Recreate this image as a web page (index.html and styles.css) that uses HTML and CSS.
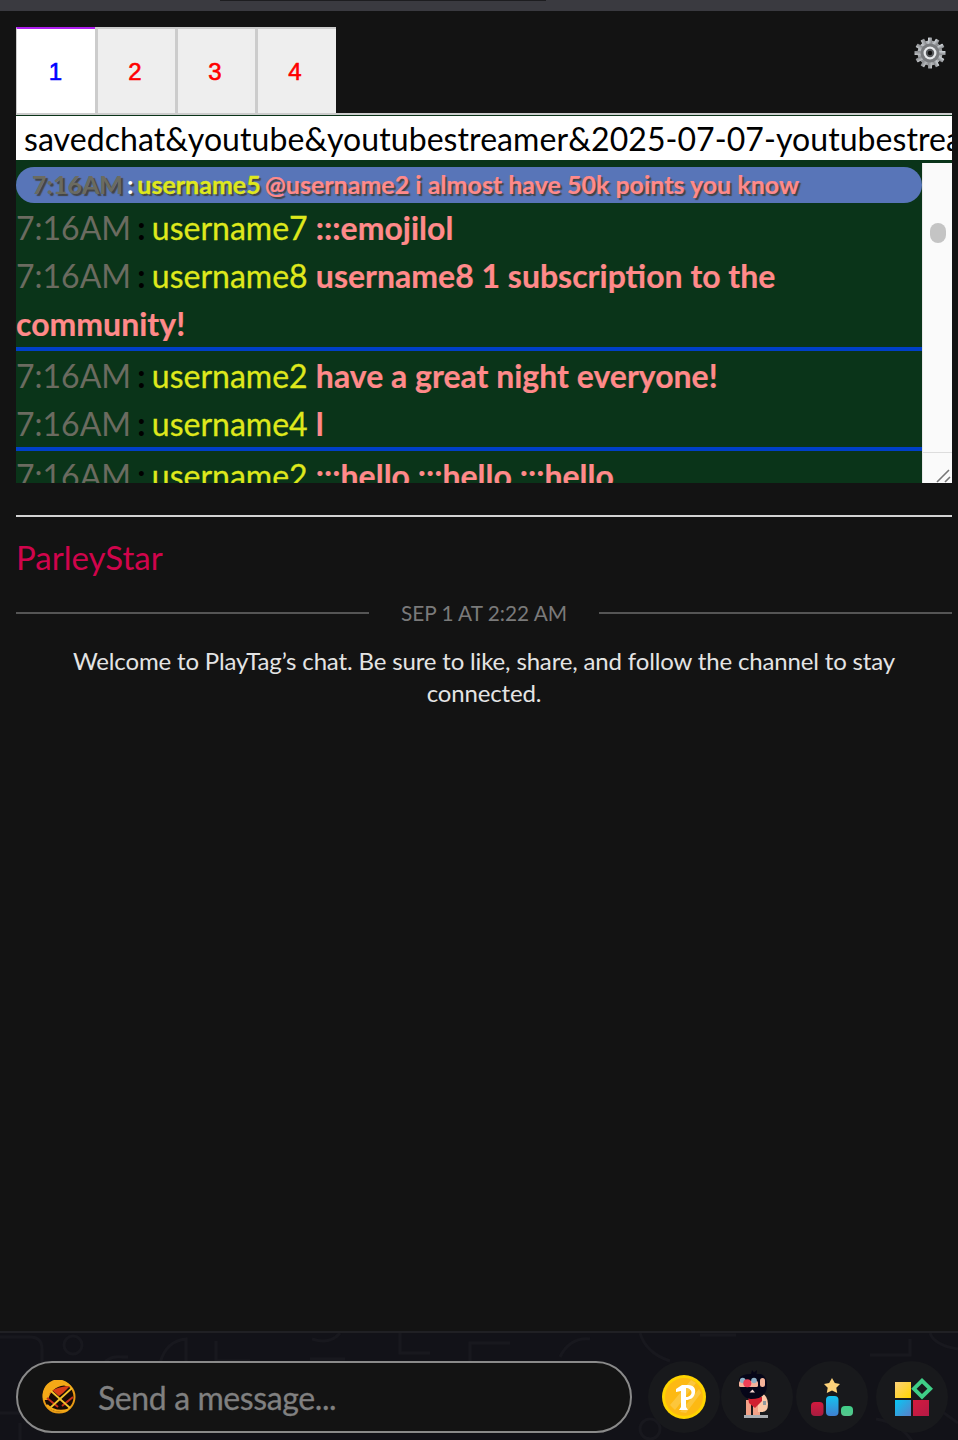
FILE: index.html
```html
<!DOCTYPE html>
<html lang="en">
<head>
<meta charset="utf-8">
<title>Chat</title>
<link rel="stylesheet" href="styles.css">
</head>
<body>
<div class="topbar"><div class="topbar-notch"></div></div>
<main class="main">
  <section class="panel">
    <div class="tabs-row">
      <div class="tabs">
        <div class="tab tab-active">1</div>
        <div class="tab">2</div>
        <div class="tab">3</div>
        <div class="tab">4</div>
      </div>
      <svg class="gear" viewBox="0 0 32 32" aria-hidden="true">
        <defs>
          <linearGradient id="gearfill" x1="0" y1="0" x2="1" y2="1">
            <stop offset="0" stop-color="#d8dde2"/>
            <stop offset="0.5" stop-color="#8b8d90"/>
            <stop offset="1" stop-color="#c4c7ca"/>
          </linearGradient>
        </defs>
        <g fill="url(#gearfill)">
          <circle cx="16" cy="16" r="12.5"/>
          <rect x="14" y="0.5" width="4" height="31" rx="0.6"/>
          <rect x="14" y="0.5" width="4" height="31" rx="0.6" transform="rotate(30 16 16)"/>
          <rect x="14" y="0.5" width="4" height="31" rx="0.6" transform="rotate(60 16 16)"/>
          <rect x="14" y="0.5" width="4" height="31" rx="0.6" transform="rotate(90 16 16)"/>
          <rect x="14" y="0.5" width="4" height="31" rx="0.6" transform="rotate(120 16 16)"/>
          <rect x="14" y="0.5" width="4" height="31" rx="0.6" transform="rotate(150 16 16)"/>
        </g>
        <circle cx="16" cy="16" r="9.5" fill="#77797c"/>
        <circle cx="16" cy="16" r="6.5" fill="#e6e8ea"/>
        <circle cx="16" cy="16" r="4.2" fill="#55575a"/>
        <circle cx="16" cy="16" r="2.2" fill="#111"/>
      </svg>
    </div>
    <div class="rule-tabs"></div>
    <div class="path-box"><div class="path-text">savedchat&amp;youtube&amp;youtubestreamer&amp;2025-07-07-youtubestreamer</div></div>
    <div class="chat-wrap">
      <div class="chat">
        <div class="pill"><span class="time">7:16AM</span><span class="colon"> : </span><span class="user">username5</span> <span class="msg">@username2 i almost have 50k points you know</span></div>
        <div class="line"><span class="time">7:16AM</span><span class="colon"> : </span><span class="user">username7</span> <span class="msg">:::emojilol</span></div>
        <div class="line line-end"><span class="time">7:16AM</span><span class="colon"> : </span><span class="user">username8</span> <span class="msg">username8 1 subscription to the community!</span></div>
        <div class="line"><span class="time">7:16AM</span><span class="colon"> : </span><span class="user">username2</span> <span class="msg">have a great night everyone!</span></div>
        <div class="line line-end"><span class="time">7:16AM</span><span class="colon"> : </span><span class="user">username4</span> <span class="msg">l</span></div>
        <div class="line"><span class="time">7:16AM</span><span class="colon"> : </span><span class="user">username2</span> <span class="msg">:::hello :::hello :::hello</span></div>
      </div>
      <div class="scroll">
        <div class="scroll-thumb"></div>
        <svg class="grip" viewBox="0 0 16 16" aria-hidden="true"><path d="M2 15 L14 3 M10 15 L15 10" stroke="#777" stroke-width="1.6" fill="none"/></svg>
      </div>
    </div>
  </section>
  <div class="rule-main"></div>
  <h2 class="title">ParleyStar</h2>
  <div class="date-row"><span class="date-line"></span><span class="date">SEP 1 AT 2:22 AM</span><span class="date-line"></span></div>
  <p class="welcome">Welcome to PlayTag’s chat. Be sure to like, share, and follow the channel to stay connected.</p>
</main>
<footer class="footer">
  <svg class="pattern" viewBox="0 0 958 108" preserveAspectRatio="none" aria-hidden="true">
    <g fill="none" stroke="#18181e" stroke-width="3">
      <circle cx="73" cy="12" r="9"/>
      <path d="M0 4 H30 Q42 4 42 16 V40 M100 40 Q104 22 122 24 H128 M160 30 Q166 8 186 6 V40 M216 8 V28 H250 M310 26 H345 M400 0 V20 H430 M470 28 V10 H510 M560 24 Q570 4 590 6 M640 0 Q646 20 670 28 M312 6 Q330 12 340 0 M700 2 H736 M930 0 Q934 12 958 16 M870 22 H910 V6"/>
      <circle cx="650" cy="96" r="10"/>
      <path d="M0 80 H28 M20 108 V90 M690 82 Q700 76 716 78 M876 86 Q900 90 912 108 M930 70 L958 90"/>
    </g>
  </svg>
  <div class="input-pill">
    <svg class="flame" viewBox="0 0 34 34" aria-hidden="true">
      <circle cx="17" cy="17" r="15.5" fill="#180b06" stroke="#e89a14" stroke-width="2"/>
      <path d="M1.5 20 A15.5 15.5 0 0 1 30 8 L22 5.5 Q9 7 6 20 Z" fill="#f4a917"/>
      <path d="M7 15 Q10 7 28 6 L21 13 L17 16 L11 11 Z" fill="#d93d16"/>
      <path d="M5 18 L16 27 M20 26 L31 17" stroke="#c8301a" stroke-width="2" fill="none"/>
      <path d="M9 11 L28 28 M8 28 L30 8" stroke="#f3c22b" stroke-width="1.8" fill="none"/>
      <path d="M5 25 Q12 33 26 30" stroke="#f4a917" stroke-width="2" fill="none"/>
    </svg>
    <span class="placeholder">Send a message...</span>
  </div>
  <div class="round round-coin">
    <svg class="ico-coin" viewBox="0 0 44 44" aria-hidden="true">
      <circle cx="22" cy="22" r="22" fill="#ffd400"/>
      <circle cx="22" cy="22" r="19" fill="#fdb913"/>
      <path d="M8 30 L29 5 L34 8 L13 35 Z M18 37 L37 14 L39 18 L24 38 Z" fill="#fcc63c"/>
      <path fill-rule="evenodd" fill="#fff" d="M14 14 L20 10 H26 C32 10 34 14 33 18 C32 23 28 25 24 25 V32 L26 35 H17 L19 32 V16 L14 17 Z M24 13 V22 C27 22 29.5 20 29.5 17.5 C29.5 15 27 13 24 13 Z"/>
    </svg>
  </div>
  <div class="round round-cave">
    <svg class="ico-cave" viewBox="0 0 34 48" aria-hidden="true">
      <rect x="7" y="45" width="24" height="3" fill="#a9adb2"/>
      <rect x="9" y="30" width="5" height="15" fill="#f3a187"/>
      <rect x="16" y="30" width="7" height="15" fill="#f3a187"/>
      <path d="M23 22 Q31 25 31 34 Q31 42 25 42 H21 V22 Z" fill="#fbc9a8"/>
      <rect x="26" y="31" width="3" height="4" fill="#8f9aa0"/>
      <path d="M11 27 H25 V31 L18 38 L12 33 Z" fill="#d1202f"/>
      <path d="M2 9 Q4 4 14 4 L15 0 L17 2.5 L20 0 L19.5 4 H24 Q30 7 30 15 Q30 29 14 29 Q2 28 2 9 Z" fill="#060618"/>
      <rect x="23" y="8" width="5" height="9" rx="2.5" fill="#f5b39a"/>
      <rect x="2" y="11" width="19" height="6" rx="1.5" fill="#f5b39a"/>
      <circle cx="5.7" cy="10.5" r="2.8" fill="#8fb2c8"/>
      <circle cx="17" cy="10.5" r="2.8" fill="#8fb2c8"/>
      <circle cx="10.3" cy="13.3" r="4" fill="#ee3f57"/>
      <path d="M12.5 22.5 L15.5 19.5 L18 22.5 Z" fill="#f3d6cf"/>
    </svg>
  </div>
  <div class="round round-rank">
    <svg class="ico-rank" viewBox="0 0 42 38" aria-hidden="true">
      <defs>
        <linearGradient id="rankb" x1="0" y1="0" x2="0" y2="1"><stop offset="0" stop-color="#14c3f0"/><stop offset="1" stop-color="#3f7fd0"/></linearGradient>
        <linearGradient id="rankr" x1="0" y1="0" x2="0" y2="1"><stop offset="0" stop-color="#d31a3e"/><stop offset="1" stop-color="#a81c40"/></linearGradient>
        <linearGradient id="rankg" x1="0" y1="0" x2="0" y2="1"><stop offset="0" stop-color="#3fcf87"/><stop offset="1" stop-color="#57c48e"/></linearGradient>
      </defs>
      <path d="M21 0 L23.8 5 L29 6 L25.3 9.8 L26.2 15 L21 12.6 L15.8 15 L16.7 9.8 L13 6 L18.2 5 Z" fill="#fdd27a"/>
      <rect x="0" y="24" width="12.5" height="14" rx="4" fill="url(#rankr)"/>
      <rect x="15" y="18" width="12.5" height="20" rx="4" fill="url(#rankb)"/>
      <rect x="30" y="28" width="12" height="10" rx="4" fill="url(#rankg)"/>
    </svg>
  </div>
  <div class="round round-blocks">
    <svg class="ico-blocks" viewBox="0 0 38 38" aria-hidden="true">
      <defs>
        <linearGradient id="bly" x1="0" y1="0" x2="1" y2="1"><stop offset="0" stop-color="#fdd27a"/><stop offset="1" stop-color="#ffd400"/></linearGradient>
        <linearGradient id="blb" x1="0" y1="0" x2="1" y2="1"><stop offset="0" stop-color="#06c8f5"/><stop offset="1" stop-color="#5a7fc8"/></linearGradient>
        <linearGradient id="blr" x1="0" y1="0" x2="1" y2="1"><stop offset="0" stop-color="#d31a3e"/><stop offset="1" stop-color="#b51a46"/></linearGradient>
      </defs>
      <rect x="0" y="4" width="16" height="16" fill="url(#bly)"/>
      <rect x="0" y="22" width="16" height="16" fill="url(#blb)"/>
      <rect x="18" y="22" width="16" height="16" fill="url(#blr)"/>
      <path d="M27 0 L38 10.7 L27 21.5 L16.2 10.7 Z M27 5.5 L21.6 10.7 L27 16 L32.4 10.7 Z" fill="#3fcf87" fill-rule="evenodd"/>
    </svg>
  </div>
</footer>
</body>
</html>
```
FILE: styles.css
```css
* { box-sizing: border-box; }
html, body { margin: 0; padding: 0; }
body {
  width: 958px;
  height: 1440px;
  overflow: hidden;
  display: flex;
  flex-direction: column;
  background: #131313;
  font-family: Lato, "Noto Sans", sans-serif;
}
.topbar {
  height: 11px;
  flex: none;
  background: #3a3a40;
  padding-left: 220px;
}
.topbar-notch {
  width: 326px;
  height: 1px;
  background: #1d1d20;
}
.main {
  flex: 1;
  min-height: 0;
  padding: 16px 6px 0 16px;
}
.tabs-row {
  display: flex;
  justify-content: space-between;
  height: 86px;
}
.tabs { display: flex; height: 86px; }
.tab {
  width: 80px;
  background: #eee;
  border-top: 2px solid #ccc;
  border-left: 3px solid #ccc;
  display: flex;
  align-items: center;
  justify-content: center;
  font: 24px "Liberation Sans", Arial, sans-serif;
  -webkit-text-stroke: 0.6px currentColor;
  color: #f00;
  padding: 2px 3px 0 0;
}
.tab-active {
  width: 79px;
  background: #fff;
  color: #00f;
  border-top: 2px solid #b020f0;
  border-left: 1px solid #ccc;
  padding-right: 1px;
  padding-left: 0;
}
.tab:last-child { width: 81px; padding-right: 4px; }
.gear {
  width: 32px;
  height: 32px;
  margin: 10px 6px 0 0;
}
.rule-tabs { height: 3px; background: #ccc; border-bottom: 1px solid #0a3419; }
.path-box {
  height: 44px;
  background: #fff;
  overflow: hidden;
  padding: 1px 0 0 8px;
}
.path-text {
  font-size: 32px;
  line-height: 44px;
  letter-spacing: 0.07px;
  color: #000;
  white-space: nowrap;
}
.chat-wrap {
  display: flex;
  height: 323px;
  background: #0a3419;
  overflow: hidden;
}
.chat {
  width: 906px;
  flex: none;
  padding-top: 7px;
  font-size: 32px;
  line-height: 48px;
}
.pill {
  height: 36px;
  line-height: 35px;
  background: #5875b8;
  border-radius: 18px;
  padding-left: 16px;
  font-size: 25px;
  font-weight: 700;
  white-space: nowrap;
  word-spacing: -2px;
  text-shadow: 2px 2px 1px #444;
}
.pill .colon { color: #fff; word-spacing: -2.1px; }
.pill .msg { word-spacing: 0; }
.line { padding-top: 1px; margin-bottom: -1px; }
.line-end {
  padding-bottom: 3px;
  margin-bottom: 0;
  background: linear-gradient(#0040c8, #0040c8) left bottom / 100% 4px no-repeat;
}
.time { color: #6b6b60; }
.colon { color: #000; font-weight: 700; word-spacing: -1.5px; }
.user { color: #dfe81c; -webkit-text-stroke: 0.3px #dfe81c; }
.msg { color: #ff8a8a; font-weight: 700; -webkit-text-stroke: 0.2px #ff8a8a; }
.scroll {
  flex: 1;
  margin-top: 3px;
  background: #fafafa;
  border-left: 1px solid #e8e8e8;
  position: relative;
}
.scroll-thumb {
  position: absolute;
  left: 7px;
  top: 60px;
  width: 16px;
  height: 20px;
  border-radius: 8px;
  background: #c4c4c4;
}
.scroll::after {
  content: "";
  position: absolute;
  left: 0;
  right: 0;
  bottom: 30px;
  height: 1px;
  background: #ddd;
}
.grip {
  position: absolute;
  right: 1px;
  bottom: 0;
  width: 16px;
  height: 16px;
}
.rule-main {
  height: 2px;
  background: #d2d2d2;
  margin-top: 32px;
}
.title {
  margin: 22px 0 0;
  font-size: 33px;
  line-height: 36px;
  font-weight: 400;
  color: #d0044c;
}
.date-row {
  display: flex;
  align-items: center;
  gap: 32px;
  margin-top: 20px;
  height: 36px;
}
.date-line { flex: 1; height: 2px; background: #555; }
.date { font-size: 20.8px; color: #7a7a7a; padding-bottom: 2px; }
.welcome {
  margin: 14px 0 0;
  font-size: 24px;
  line-height: 32px;
  letter-spacing: -0.15px;
  color: #e4e4e4;
  text-align: center;
}
.footer {
  flex: none;
  height: 109px;
  position: relative;
  display: flex;
  align-items: center;
  padding: 28px 10px 7px 16px;
  border-top: 2px solid #202024;
  background: #121218;
  overflow: hidden;
}
.pattern {
  position: absolute;
  left: 0;
  top: 0;
  width: 958px;
  height: 108px;
}
.input-pill {
  position: relative;
  flex: none;
  width: 616px;
  height: 72px;
  border: 2px solid #8a8a8a;
  border-radius: 36px;
  background: #131313;
  display: flex;
  align-items: center;
  padding-left: 24px;
}
.flame { width: 34px; height: 34px; flex: none; }
.placeholder {
  margin-left: 22px;
  font-size: 32px;
  color: #808080;
  letter-spacing: -0.4px;
  -webkit-text-stroke: 0.3px #808080;
}
.round {
  position: relative;
  width: 72px;
  height: 72px;
  flex: none;
  border-radius: 50%;
  background: #18191c;
  display: flex;
  align-items: center;
  justify-content: center;
}
.round-coin { margin-left: 16px; }
.round-cave { margin-left: 1px; }
.round-rank { margin-left: 3px; }
.round-blocks { margin-left: 8px; }
.ico-coin { width: 44px; height: 44px; }
.ico-cave { width: 34px; height: 48px; margin: 0 6px 6px 0; }
.ico-rank { width: 42px; height: 38px; }
.ico-blocks { width: 38px; height: 38px; margin-left: 3px; }
```
